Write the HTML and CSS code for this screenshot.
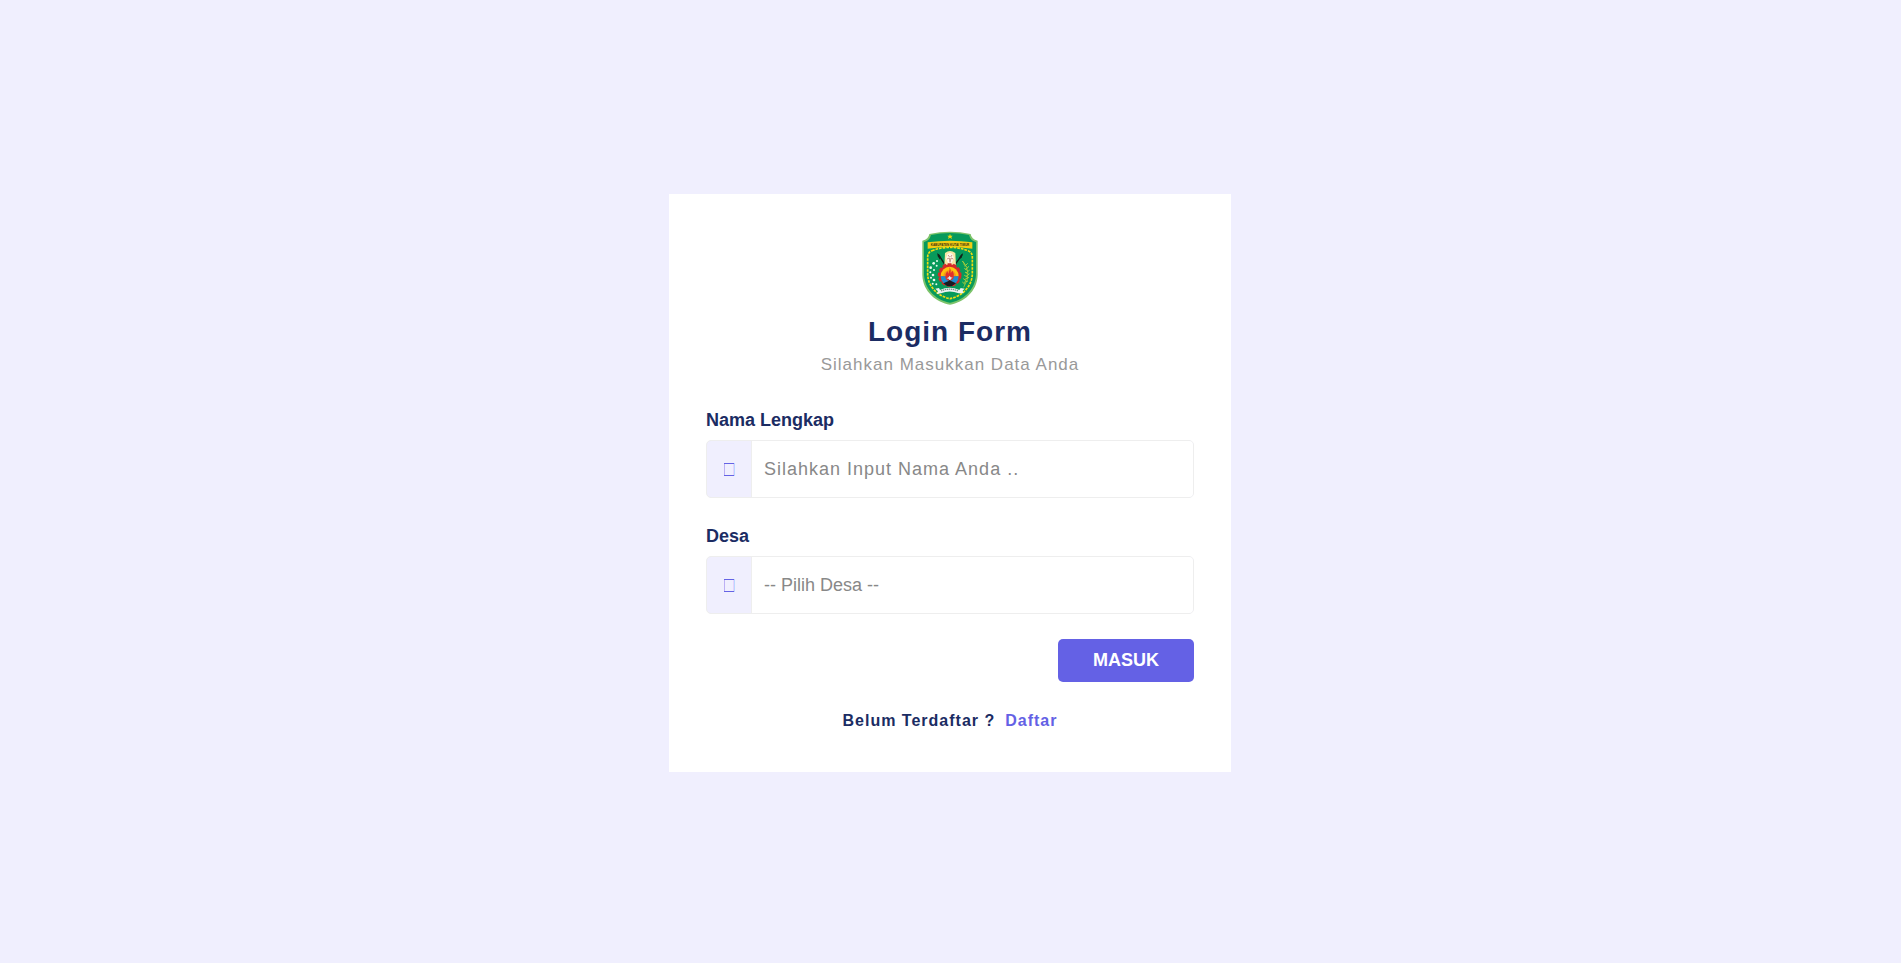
FILE: index.html
```html
<!DOCTYPE html>
<html lang="id">
<head>
    <meta charset="UTF-8">
    <meta name="viewport" content="width=device-width, initial-scale=1.0">
    <title>Login Form</title>
    <link rel="stylesheet" href="styles.css">
</head>
<body>
    <main class="card">
        <div class="header">
            <svg class="logo" viewBox="0 0 168 222" role="img" aria-label="Logo Kabupaten">
                <!-- shield -->
                <path d="M22 9 Q84 -5 146 9 Q148 25 167 29 V132 C166 182 124 215 84 221 C44 215 2 182 1 132 V29 Q20 25 22 9 Z" fill="#7cc36a"/>
                <path d="M27 12 Q84 0 141 12 Q145 29 162 33 V131 C160 178 121 209 84 215 C47 209 8 178 6 131 V33 Q23 29 27 12 Z" fill="#079a5b"/>
                <path d="M84 8 L86 14 L92 14 L88 18 L90 24 L84 20 L78 24 L80 18 L76 14 L82 14 Z" fill="#f5d90f"/>
                <!-- dotted frame -->
                <path d="M30 59 Q84 39 138 59 Q151 64 151 78 V128 C150 170 116 197 84 203 C52 197 17 170 17 128 V78 Q17 64 30 59 Z" fill="none" stroke="#f3dc10" stroke-width="5" stroke-dasharray="8 3"/>
                <path d="M17 34 Q84 25 151 34 V53 Q84 43 17 53 Z" fill="#f3cc12"/>
                <text class="logo-text" x="84" y="44" text-anchor="middle">KABUPATEN KUTAI TIMUR</text>
                <!-- spears and shield -->
                <path d="M49 70 L76 112 M121 70 L91 112" stroke="#12221a" stroke-width="4"/>
                <path d="M46 66 L55 75 L54 86 L47 76 Z M123 66 L114 75 L110 86 L119 80 Z" fill="#12221a"/>
                <path d="M69 66 Q84 54 100 66 L102 108 H67 Z" fill="#f8e7a5"/>
                <path d="M76 70 Q84 62 92 70 L96 82 L89 96 L84 102 L78 96 L72 82 Z" fill="#fff6e8"/>
                <path d="M78 72 L83 78 M90 72 L86 78 M75 84 L82 81 L84 94 L87 81 L94 84" fill="none" stroke="#c99687" stroke-width="3"/>
                <!-- gear -->
                <circle cx="83" cy="132" r="32" fill="none" stroke="#d52b2b" stroke-width="7" stroke-dasharray="11 5"/>
                <circle cx="83" cy="132" r="32" fill="#d52b2b"/>
                <path d="M56 136 A27 29 0 0 1 110 136 Z" fill="#ffc30f"/>
                <path d="M64 136 A19 19 0 0 1 102 136 Z" fill="#f79a16"/>
                <path d="M56 136 H110 A27 27 0 0 1 56 136 Z" fill="#1d8fd1"/>
                <path d="M83 108 Q88 119 86 126 L92 119 Q98 130 95 141 Q91 149 83 149 Q73 149 70 140 Q69 128 76 120 L79 128 Q84 119 83 108 Z" fill="#e1322c"/>
                <path d="M83 134 L86 139 L92 140 L87 143 L84 149 L80 143 L74 142 L80 139 Z" fill="#d6edf1"/>
                <path d="M64 157 L78 151 L83 147 L89 151 L102 157 Q92 166 83 166 Q73 166 64 157 Z" fill="#171a20"/>
                <!-- cotton -->
                <g fill="#e9fbf0">
                    <circle cx="45" cy="90" r="3"/><circle cx="35" cy="97" r="4"/><circle cx="44" cy="104" r="3"/>
                    <circle cx="26" cy="110" r="4"/><circle cx="36" cy="117" r="3"/><circle cx="25" cy="124" r="3"/>
                    <circle cx="33" cy="132" r="4"/><circle cx="27" cy="140" r="3"/><circle cx="36" cy="147" r="4"/>
                    <circle cx="32" cy="158" r="3"/><circle cx="43" cy="160" r="3"/>
                </g>
                <!-- rice -->
                <path d="M123 91 Q152 126 125 169" fill="none" stroke="#c4cf2c" stroke-width="2"/>
                <path d="M121 90 L129 101 M128 106 L137 97 M130 116 L141 106 M132 126 L143 117 M132 136 L143 128 M129 145 L141 139 M126 154 L138 150 M125 100 L134 107 M127 112 L137 119 M129 123 L138 129 M127 133 L137 139 M124 143 L133 150 M121 153 L129 160" stroke="#a9ce3c" stroke-width="3"/>
                <!-- ribbon -->
                <path d="M40 173 L51 171 L54 177 Q83 163 112 177 L116 171 L128 173 L122 179 L125 187 L110 187 Q83 176 57 187 L44 189 L48 181 Z" fill="#edf3f2"/>
                <path d="M57 180 Q83 169 109 180" fill="none" stroke="#789289" stroke-width="4" stroke-dasharray="4 2"/>
            </svg>
            <h1>Login Form</h1>
            <p>Silahkan Masukkan Data Anda</p>
        </div>
        <form class="form">
            <div class="form-group">
                <label for="nama">Nama Lengkap</label>
                <div class="field">
                    <span class="icon">
                        <svg class="box" viewBox="0 0 11 13" aria-hidden="true">
                            <path d="M0 0 H1 V13 H0 Z" fill="#bcb0f4"/>
                            <path d="M9 1 H10 V12 H9 Z" fill="#e5d2fc"/>
                            <path d="M10 0 H11 V13 H10 Z" fill="#b9d8ff"/>
                            <path d="M0 0 H10 V1 H0 Z M0 12 H10 V13 H0 Z" fill="#6563e5"/>
                        </svg>
                    </span>
                    <input type="text" id="nama" name="nama" placeholder="Silahkan Input Nama Anda ..">
                </div>
            </div>
            <div class="form-group">
                <label for="desa">Desa</label>
                <div class="field">
                    <span class="icon">
                        <svg class="box" viewBox="0 0 11 13" aria-hidden="true">
                            <path d="M0 0 H1 V13 H0 Z" fill="#bcb0f4"/>
                            <path d="M9 1 H10 V12 H9 Z" fill="#e5d2fc"/>
                            <path d="M10 0 H11 V13 H10 Z" fill="#b9d8ff"/>
                            <path d="M0 0 H10 V1 H0 Z M0 12 H10 V13 H0 Z" fill="#6563e5"/>
                        </svg>
                    </span>
                    <select id="desa" name="desa">
                        <option value="">-- Pilih Desa --</option>
                    </select>
                </div>
            </div>
            <button type="submit" class="btn">MASUK</button>
        </form>
        <div class="footer">
            <span>Belum Terdaftar ?</span>
            <a href="#">Daftar</a>
        </div>
    </main>
</body>
</html>
```

FILE: styles.css
```css
* {
    margin: 0;
    padding: 0;
    box-sizing: border-box;
}
body {
    display: flex;
    justify-content: center;
    align-items: center;
    min-height: 100vh;
    padding: 3px 1px 0 0;
    background-color: #f0effe;
    font-family: "Liberation Sans", Arial, sans-serif;
    color: #1b2c63;
}
.card {
    width: 100%;
    max-width: 562px;
    padding: 37px 37px 42px;
    background-color: #fff;
}
.header {
    display: flex;
    flex-direction: column;
    align-items: center;
    margin-bottom: 35px;
}
.logo {
    width: 56px;
    height: 74px;
    margin-bottom: 11px;
}
.logo-text {
    font-size: 9px;
    font-weight: bold;
    fill: #3a3510;
}
.header h1 {
    font-size: 28px;
    line-height: 32px;
    letter-spacing: 1px;
}
.header p {
    margin-top: 7px;
    font-size: 17px;
    line-height: 20px;
    letter-spacing: 1px;
    color: #999;
}
.form {
    display: flex;
    flex-direction: column;
}
.form-group {
    margin-bottom: 28px;
}
.form-group:last-of-type {
    margin-bottom: 25px;
}
.form-group label {
    display: block;
    margin-bottom: 10px;
    font-size: 18px;
    line-height: 20px;
    font-weight: bold;
}
.field {
    display: flex;
    height: 58px;
    border: 1px solid #eee;
    border-radius: 5px;
    background-color: #f0effe;
    overflow: hidden;
}
.icon {
    display: flex;
    justify-content: center;
    align-items: center;
    width: 45px;
    border-right: 1px solid #eee;
}
.box {
    width: 11px;
    height: 13px;
}
.field input,
.field select {
    flex: 1;
    min-width: 0;
    padding: 0 12px;
    border: none;
    outline: none;
    appearance: none;
    background-color: #fff;
    font-family: inherit;
    font-size: 18px;
    color: #888;
}
.field input {
    letter-spacing: 1px;
}
.field input::placeholder {
    color: #888;
}
.btn {
    align-self: flex-end;
    width: 136px;
    height: 43px;
    border: none;
    border-radius: 5px;
    background-color: #6461e5;
    font-family: inherit;
    font-size: 18px;
    font-weight: bold;
    color: #fff;
    cursor: pointer;
}
.btn:hover {
    background-color: #4f4cd0;
}
.footer {
    display: flex;
    justify-content: center;
    gap: 10px;
    margin-top: 30px;
    font-size: 16px;
    line-height: 18px;
    font-weight: bold;
    letter-spacing: 1px;
}
.footer a {
    color: #6461e5;
    text-decoration: none;
}
```
